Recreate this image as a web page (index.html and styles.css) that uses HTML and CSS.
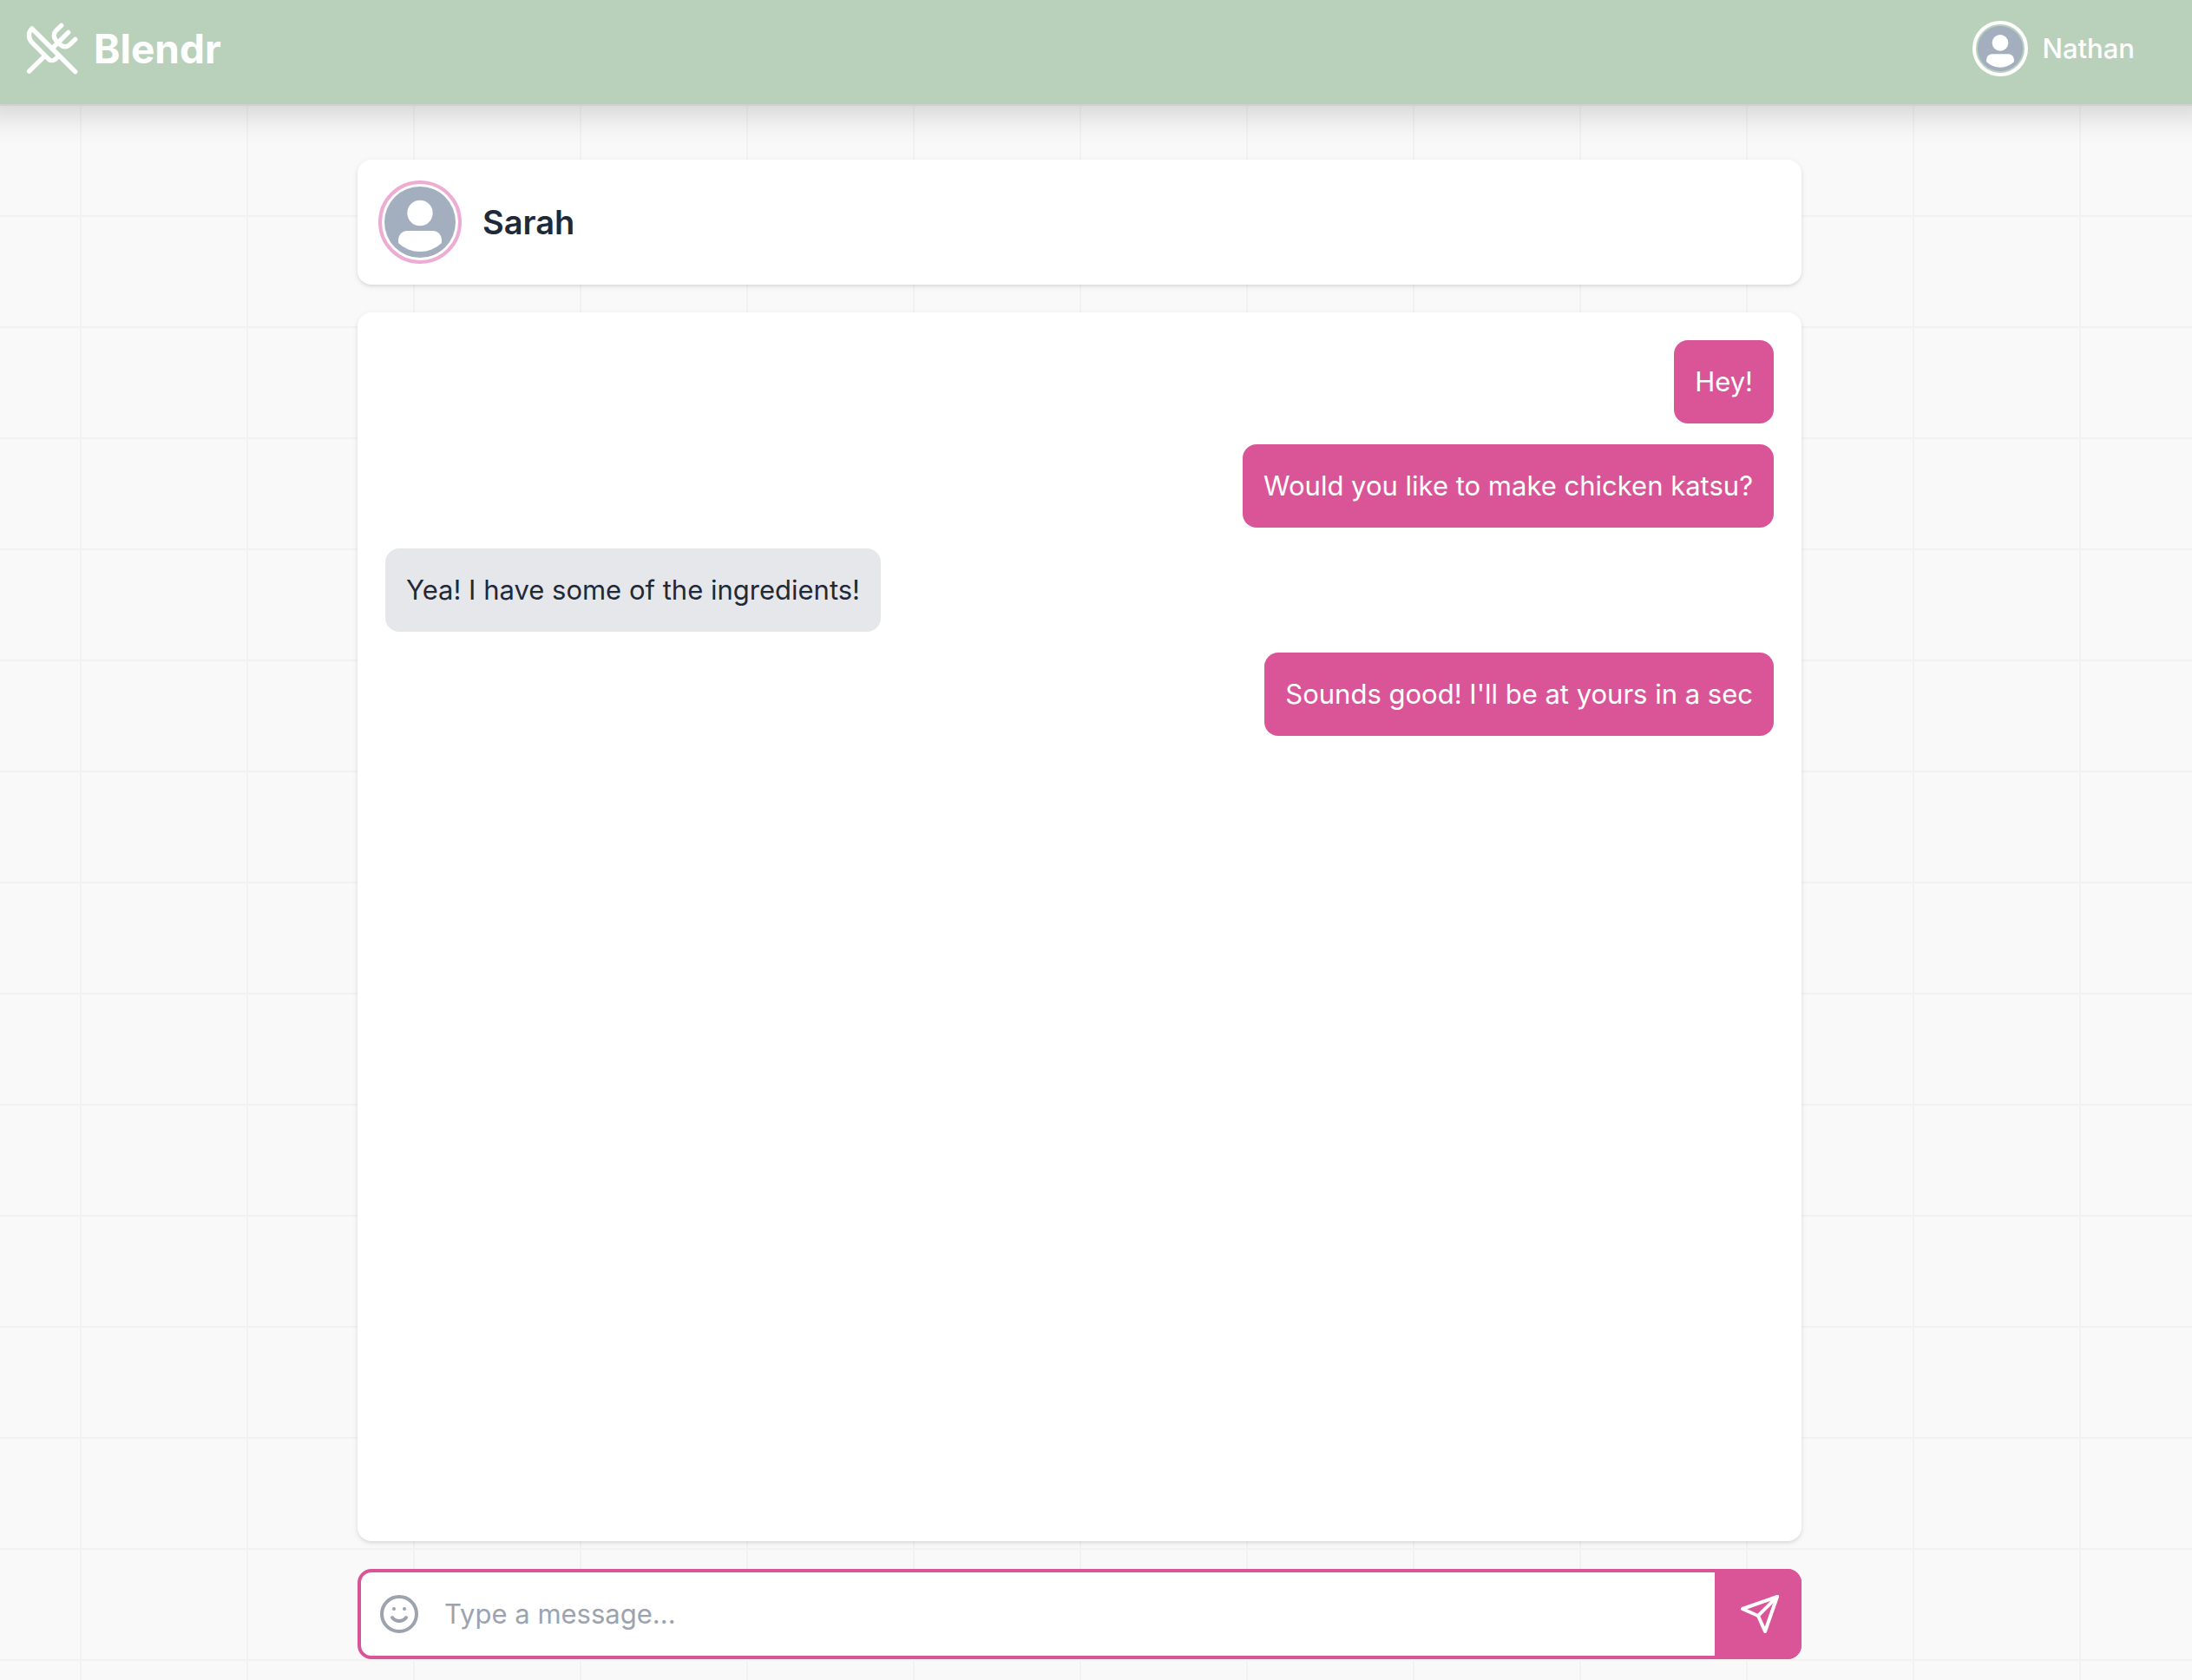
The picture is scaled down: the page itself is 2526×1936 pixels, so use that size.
FILE: index.html
```html
<!DOCTYPE html>
<html lang="en">
<head>
  <meta charset="UTF-8">
  <meta name="viewport" content="width=device-width, initial-scale=1.0">
  <title>Blendr</title>
  <link rel="stylesheet" href="styles.css">
</head>
<body>
  <!-- shared avatar drawing -->
  <svg class="sprite" aria-hidden="true">
    <symbol id="avatar" viewBox="0 0 88 88">
      <circle cx="44" cy="44" r="41" fill="#a3aebe"/>
      <circle cx="44" cy="33.5" r="14.7" fill="#fff"/>
      <path d="M19 68v-4a10 10 0 0 1 10-10h30a10 10 0 0 1 10 10v4a36 36 0 0 1-50 0z" fill="#fff"/>
    </symbol>
  </svg>

  <header class="navbar">
    <a class="brand" href="#">
      <svg class="brand-icon" viewBox="0 0 24 24" aria-hidden="true">
        <path d="m16 2-2.3 2.3a3 3 0 0 0 0 4.2l1.8 1.8a3 3 0 0 0 4.2 0L22 8"/>
        <path d="M15 15 3.3 3.3a4.2 4.2 0 0 0 0 6l7.3 7.3c.7.7 2 .7 2.8 0L15 15Zm0 0 7 7"/>
        <path d="m2.1 21.8 6.4-6.3"/>
        <path d="m19 5-7 7"/>
      </svg>
      <span>Blendr</span>
    </a>
    <a class="profile" href="#">
      <svg class="avatar avatar-small" aria-hidden="true"><use href="#avatar"/></svg>
      <span>Nathan</span>
    </a>
  </header>

  <main class="chat">
    <section class="chat-header">
      <svg class="avatar avatar-large" aria-hidden="true"><use href="#avatar"/></svg>
      <h1>Sarah</h1>
    </section>

    <section class="messages">
      <p class="message sent">Hey!</p>
      <p class="message sent">Would you like to make chicken katsu?</p>
      <p class="message received">Yea! I have some of the ingredients!</p>
      <p class="message sent">Sounds good! I'll be at yours in a sec</p>
    </section>

    <form class="composer">
      <button class="emoji-button" type="button" aria-label="Add emoji">
        <svg class="icon" viewBox="0 0 24 24" aria-hidden="true">
          <circle cx="12" cy="12" r="10"/>
          <path d="M8 14s1.5 2 4 2 4-2 4-2"/>
          <path d="M9 9h.01"/>
          <path d="M15 9h.01"/>
        </svg>
      </button>
      <input type="text" placeholder="Type a message..." aria-label="Message">
      <button class="send-button" type="submit" aria-label="Send">
        <svg class="icon" viewBox="0 0 24 24" aria-hidden="true">
          <path d="m22 2-7 20-4-9-9-4Z"/>
          <path d="M22 2 11 13"/>
        </svg>
      </button>
    </form>
  </main>
</body>
</html>
```
FILE: styles.css
```css
* {
  box-sizing: border-box;
}
body {
  margin: 0;
  min-height: 100vh;
  display: flex;
  flex-direction: column;
  overflow-x: hidden;
  font-family: Inter, "Liberation Sans", sans-serif;
  font-size: 31px;
  line-height: 48px;
  color: #1f2937;
  background-color: #f9f9f9;
  /* grid lines */
  background-image:
    linear-gradient(to right, #f2f2f2 2px, transparent 2px),
    linear-gradient(to bottom, #f2f2f2 2px, transparent 2px);
  background-size: 192px 128px;
  background-position: 92px 120px;
}
.sprite {
  position: absolute;
  width: 0;
  height: 0;
}
.icon,
.brand-icon {
  display: block;
  fill: none;
  stroke: currentColor;
  stroke-width: 2;
  stroke-linecap: round;
  stroke-linejoin: round;
}
.icon {
  width: 48px;
  height: 48px;
}

/* navbar */
.navbar {
  display: flex;
  justify-content: space-between;
  align-items: center;
  padding: 24px 66px 32px 28px;
  background-color: #b9d1bb;
  border-bottom: 2px solid #d1d1d1;
  box-shadow: 0 -12px 32px 24px rgba(0, 0, 0, 0.15);
}
.brand,
.profile {
  display: flex;
  align-items: center;
  gap: 16px;
  color: #fff;
  text-decoration: none;
}
.brand {
  font-size: 46px;
  font-weight: 700;
}
.brand-icon {
  width: 64px;
  height: 64px;
}
.profile {
  font-weight: 500;
}
.avatar {
  flex: none;
  border: 4px solid #fff;
  border-radius: 50%;
}
.avatar-small {
  width: 64px;
  height: 64px;
}
.avatar-large {
  width: 96px;
  height: 96px;
  border-color: #eeabd3;
}

/* chat */
.chat {
  flex: 1;
  display: flex;
  flex-direction: column;
  gap: 32px;
  width: 100%;
  max-width: 1740px;
  margin: 0 auto;
  padding: 62px 57px 24px 19px;
}
.chat-header,
.messages {
  background-color: #fff;
  border-radius: 16px;
  box-shadow: 0 2px 6px rgba(0, 0, 0, 0.1), 0 2px 4px -2px rgba(0, 0, 0, 0.1);
}
.chat-header {
  display: flex;
  align-items: center;
  gap: 24px;
  padding: 24px;
}
.chat-header h1 {
  margin: 0;
  font-size: 38px;
  font-weight: 600;
}
.messages {
  flex: 1;
  display: flex;
  flex-direction: column;
  align-items: flex-start;
  gap: 24px;
  padding: 32px;
}
.message {
  margin: 0;
  padding: 24px;
  max-width: 75%;
  border-radius: 16px;
}
.sent {
  align-self: flex-end;
  background-color: #da5597;
  color: #fff;
}
.received {
  background-color: #e5e7eb;
}

/* message box */
.composer {
  display: flex;
  height: 104px;
  background-color: #fff;
  border: 4px solid #da5597;
  border-radius: 16px;
}
.composer button {
  display: flex;
  align-items: center;
  border: none;
  cursor: pointer;
}
.emoji-button {
  padding: 0 20px;
  background: none;
  color: #9ca3af;
}
.composer input {
  flex: 1;
  min-width: 0;
  padding: 0 8px;
  border: none;
  outline: none;
  font: inherit;
  color: inherit;
}
.composer input::placeholder {
  color: #9ca3af;
}
/* covers the border on its side */
.composer .send-button {
  margin: -4px -4px -4px 0;
  padding: 0 24px 0 28px;
  border-radius: 0 16px 16px 0;
  background-color: #da5597;
  color: #fff;
}
```
